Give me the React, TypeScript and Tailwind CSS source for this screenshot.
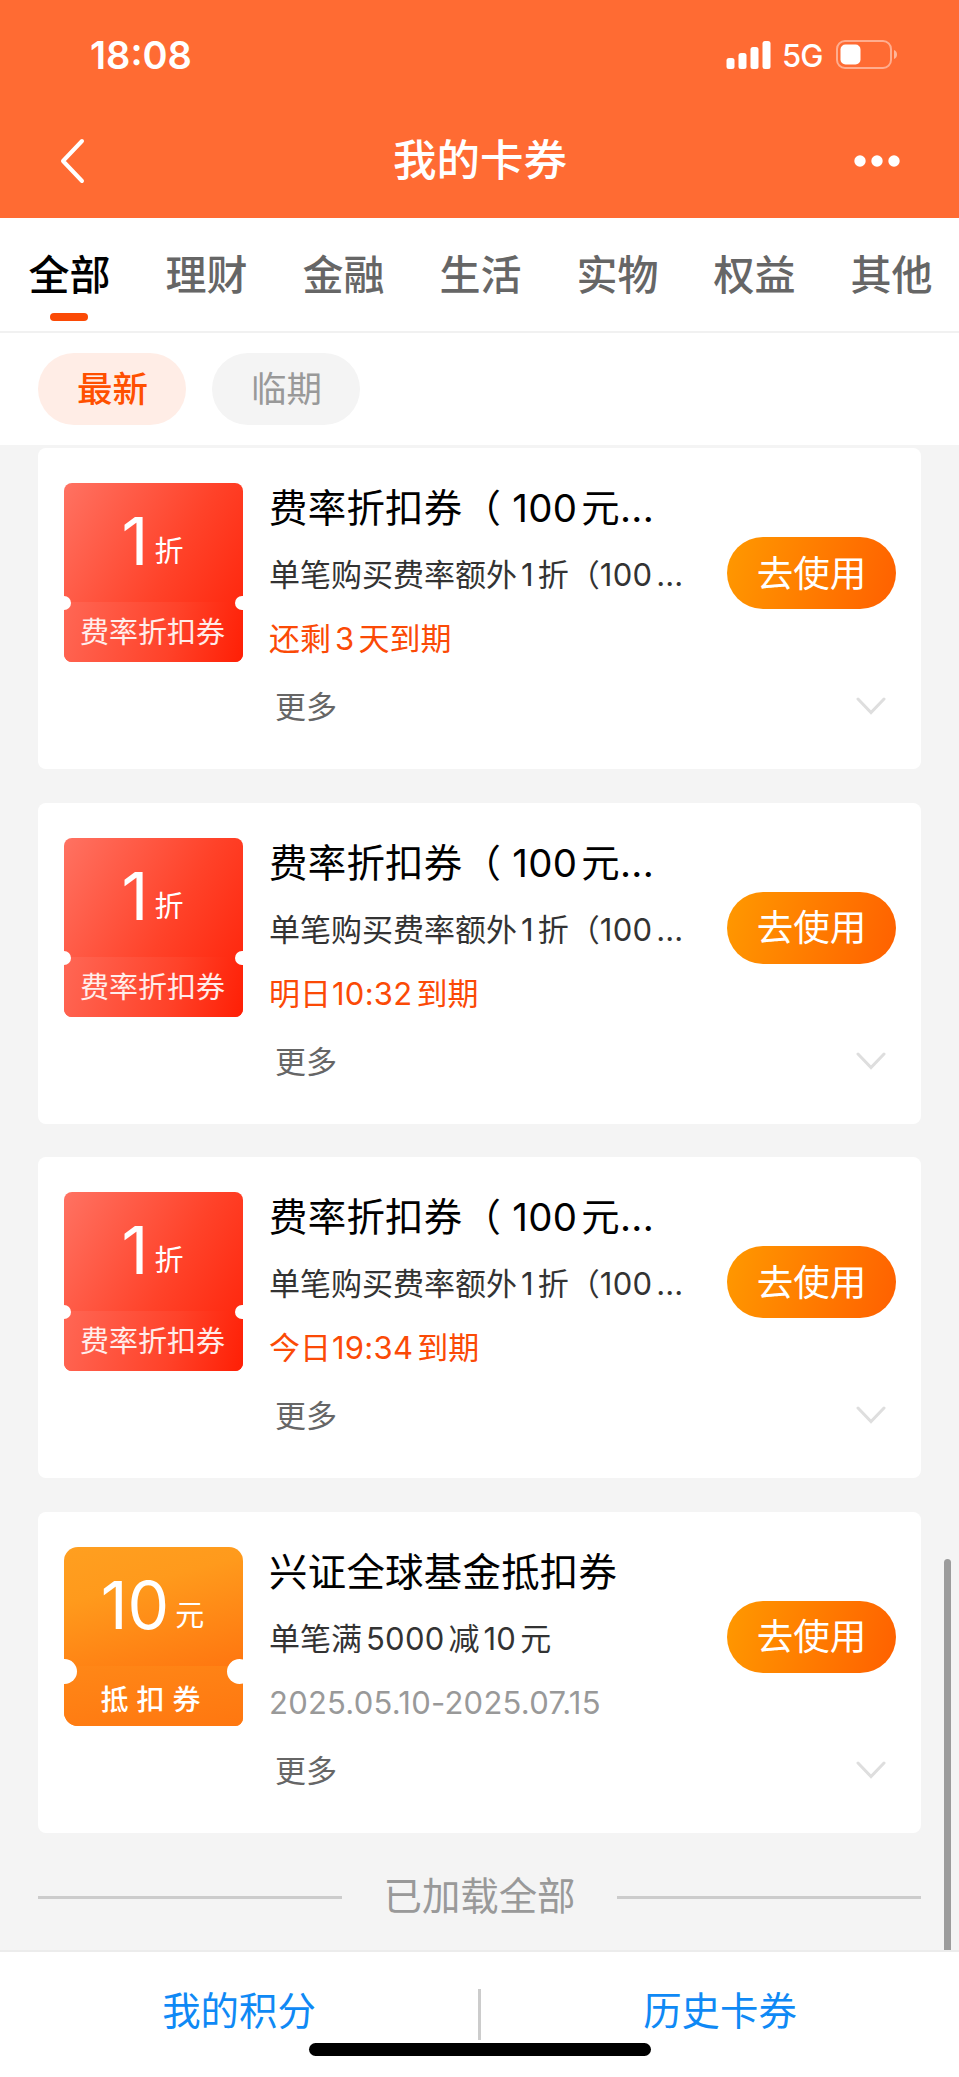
import { Fragment } from "react";
import clsx from "clsx";

type Coupon = {
    kind: "rate" | "cash";
    amount: string;
    unit: string;
    label: string;
    title: string;
    description: string;
    expiry: string;
    urgent: boolean;
};

const tabs = ["全部", "理财", "金融", "生活", "实物", "权益", "其他"];

const rateCoupon = {
    kind: "rate" as const,
    amount: "1",
    unit: "折",
    label: "费率折扣券",
    title: "费率折扣券（ 100元...",
    description: "单笔购买费率额外1折（100...",
    urgent: true,
};

const coupons: Coupon[] = [
    { ...rateCoupon, expiry: "还剩3天到期" },
    { ...rateCoupon, expiry: "明日10:32到期" },
    { ...rateCoupon, expiry: "今日19:34到期" },
    {
        kind: "cash",
        amount: "10",
        unit: "元",
        label: "抵扣券",
        title: "兴证全球基金抵扣券",
        description: "单笔满5000减10元",
        expiry: "2025.05.10-2025.07.15",
        urgent: false,
    },
];

// Adds a small gap wherever a number touches a Chinese character
function MixedText({ text }: { text: string }) {
    const parts = text.split(/(\d[\d:.-]*\d|\d)/);
    return (
        <>
            {parts.map((part, i) =>
                i % 2 === 0 ? (
                    <Fragment key={i}>{part}</Fragment>
                ) : (
                    <span
                        key={i}
                        className={clsx(
                            "tracking-[0.008em]",
                            /[\u4e00-\u9fa5]$/.test(parts[i - 1]) && (part.includes(":") ? "ml-px" : "ml-1"),
                            parts[i + 1] && "mr-1"
                        )}
                    >
                        {part}
                    </span>
                )
            )}
        </>
    );
}

function StatusBar() {
    return (
        <div className="flex h-[109px] items-center justify-between pl-[90px] pr-[61px]">
            <span className="text-[38px] font-semibold leading-none">18:08</span>
            <div className="flex items-center">
                <svg width="45" height="28" viewBox="0 0 45 28" fill="white">
                    <rect x="0.5" y="17" width="8" height="11" rx="2.5" />
                    <rect x="12.5" y="12" width="8" height="16" rx="2.5" />
                    <rect x="24.5" y="6" width="8" height="22" rx="2.5" />
                    <rect x="36.5" y="0" width="8" height="28" rx="2.5" />
                </svg>
                <span className="ml-[11px] mt-0.5 w-[42px] text-[31px] font-medium leading-none tracking-[-0.03em]">5G</span>
                <svg className="ml-3" width="62" height="29" viewBox="0 0 62 29" fill="none">
                    <rect x="1" y="1" width="54" height="27" rx="8" stroke="white" strokeOpacity="0.45" strokeWidth="2" />
                    <rect x="4.5" y="4.5" width="20" height="20" rx="5" fill="white" />
                    <path d="M58 10c4 1.500 4 7.500 0 9z" fill="white" fillOpacity="0.5" />
                </svg>
            </div>
        </div>
    );
}

function Header() {
    return (
        <header className="h-[218px] bg-[#ff6b33] text-white">
            <StatusBar />
            <div className="flex h-[104px] items-center justify-between pl-[60px] pr-[59px]">
                <svg className="mr-1.5" width="40" height="46" viewBox="0 0 40 46" fill="none" stroke="white" strokeWidth="4" strokeLinecap="round" strokeLinejoin="round">
                    <path d="M22 3 3 23l19 20" />
                </svg>
                <h1 className="text-[43.500px] font-medium leading-none">我的卡券</h1>
                <svg width="46" height="12" viewBox="0 0 46 12" fill="white">
                    <circle cx="6" cy="6" r="5.700" />
                    <circle cx="23" cy="6" r="5.700" />
                    <circle cx="40" cy="6" r="5.700" />
                </svg>
            </div>
        </header>
    );
}

function Tabs() {
    return (
        <nav className="flex h-[115px] gap-[55px] border-b-2 border-[#f1f1f1] bg-white pl-7">
            {tabs.map((tab, i) => (
                <div key={tab} className="flex w-[82px] shrink-0 flex-col items-center">
                    <span
                        className={clsx(
                            "ml-px mt-[27px] h-[60px] whitespace-nowrap text-[41px] leading-[60px] font-medium",
                            i === 0 ? "text-black" : "text-[#666]"
                        )}
                    >
                        {tab}
                    </span>
                    {i === 0 && <div className="mt-2 h-2 w-[38px] rounded-full bg-[#fb4a06]" />}
                </div>
            ))}
        </nav>
    );
}

function Filters() {
    return (
        <div className="flex h-28 gap-[26px] bg-white pl-[38px] pt-5">
            <button className="h-[72px] w-[148px] rounded-full bg-[#ffede6] pl-px pt-px text-[35.500px] font-medium text-[#ff5000]">最新</button>
            <button className="h-[72px] w-[148px] rounded-full bg-[#f4f4f4] pl-px pt-px text-[35.500px] text-[#999]">临期</button>
        </div>
    );
}

function CouponBadge({ coupon }: { coupon: Coupon }) {
    const isRate = coupon.kind === "rate";
    const notch = isRate ? "size-[14px] top-[113px]" : "size-[25px] top-[112px]";

    return (
        <div
            className={clsx(
                "relative mt-[35px] flex h-[179px] w-[179px] shrink-0 flex-col overflow-hidden text-white",
                isRate
                    ? "rounded-lg bg-linear-[120deg,#ff7262,#ff4229_55%,#ff1f05]"
                    : "rounded-[14px] rounded-br-lg bg-linear-[165deg,#ff9f20,#ff9a1c_25%,#ff7710_72%]"
            )}
        >
            <div className="flex h-[119px] items-baseline justify-center gap-1.5 pr-0.5">
                <span className="text-[66px] leading-[116px]">{coupon.amount}</span>
                <span className="relative -top-[3px] text-[29px]">{coupon.unit}</span>
            </div>
            <div
                className={clsx(
                    "flex h-[60px] items-center justify-center whitespace-nowrap",
                    isRate
                        ? "bg-linear-[105deg,#ff6755,#ff4229_60%,#ff1f05] pr-0.5 pt-0.5 text-[29px] text-white/90"
                        : "bg-linear-[170deg,#ff8717,#ff7710] pl-0.5 pt-2 text-[28px] font-medium tracking-[8px]"
                )}
            >
                {coupon.label}
            </div>
            <div className={clsx("absolute rounded-full bg-white", notch, isRate ? "-left-[7px]" : "-left-3")} />
            <div className={clsx("absolute rounded-full bg-white", notch, isRate ? "-right-[6px]" : "-right-[9px]")} />
        </div>
    );
}

function CouponCard({ coupon }: { coupon: Coupon }) {
    return (
        <article className="flex h-[321px] rounded-lg bg-white pl-[26px] pr-6">
            <CouponBadge coupon={coupon} />
            <div className="ml-[26px] w-[458px] shrink-0 whitespace-nowrap">
                <h2 className="mt-[30px] h-[60px] text-[38.400px] leading-[60px] tracking-[0.3px] text-black">
                    <MixedText text={coupon.title} />
                </h2>
                <p className="mt-[7px] h-[60px] text-[31px] leading-[60px] text-[#333]">
                    <MixedText text={coupon.description} />
                </p>
                <p className={clsx("mt-1 h-[60px] text-[31px] leading-[60px]", coupon.urgent ? "text-[#fb4a06]" : "text-[#999]")}>
                    <MixedText text={coupon.expiry} />
                </p>
                <p className="ml-1.5 mt-2 h-[60px] text-[31px] leading-[60px] text-[#666]">更多</p>
            </div>
            <div className="flex w-[169px] shrink-0 flex-col items-end">
                <button className="mt-[89px] h-[72px] w-full rounded-full bg-linear-[105deg,#ff9900,#ff6000] pt-0.5 text-[36.500px] text-white">
                    去使用
                </button>
                <svg className="mr-2.5 mt-[88px]" width="30" height="18" viewBox="0 0 30 18" fill="none" stroke="#dedede" strokeWidth="3" strokeLinecap="round">
                    <path d="M2 2l13 13.500L28 2" />
                </svg>
            </div>
        </article>
    );
}

function Footer() {
    return (
        <footer className="relative h-[127px] border-t-2 border-[#ececec] bg-white text-[38.400px] text-[#0f89f5]">
            <div className="flex h-[118px] items-center pl-0.5">
                <span className="-ml-0.5 flex-1 pt-px text-center">我的积分</span>
                <span className="mt-1.5 h-[51px] w-[3px] bg-[#ccc]" />
                <span className="flex-1 pt-px text-center">历史卡券</span>
            </div>
            {/* iOS home indicator */}
            <div className="absolute left-[309px] top-[91px] h-[13px] w-[342px] rounded-full bg-black" />
        </footer>
    );
}

export default function App() {
    return (
        <div className="flex h-[2077px] w-[959px] flex-col overflow-hidden bg-[#f4f4f4] font-[Inter,'Noto_Sans_CJK_SC',sans-serif]">
            <Header />
            <Tabs />
            <Filters />
            <main className="relative flex-1 px-[38px] pt-[3px]">
                <div className="flex flex-col gap-[33.600px]">
                    {coupons.map((coupon, i) => (
                        <CouponCard key={i} coupon={coupon} />
                    ))}
                </div>
                <div className="mt-[34px] flex h-[60px] items-center justify-between text-[38.400px] text-[#999]">
                    <span className="mt-px h-[3px] w-[304px] bg-[#ccc]" />
                    <span>已加载全部</span>
                    <span className="mt-px h-[3px] w-[304px] bg-[#ccc]" />
                </div>
                <div className="absolute bottom-0 right-2 h-[391px] w-[7px] rounded-t-full bg-[#9c9c9c]" />
            </main>
            <Footer />
        </div>
    );
}
